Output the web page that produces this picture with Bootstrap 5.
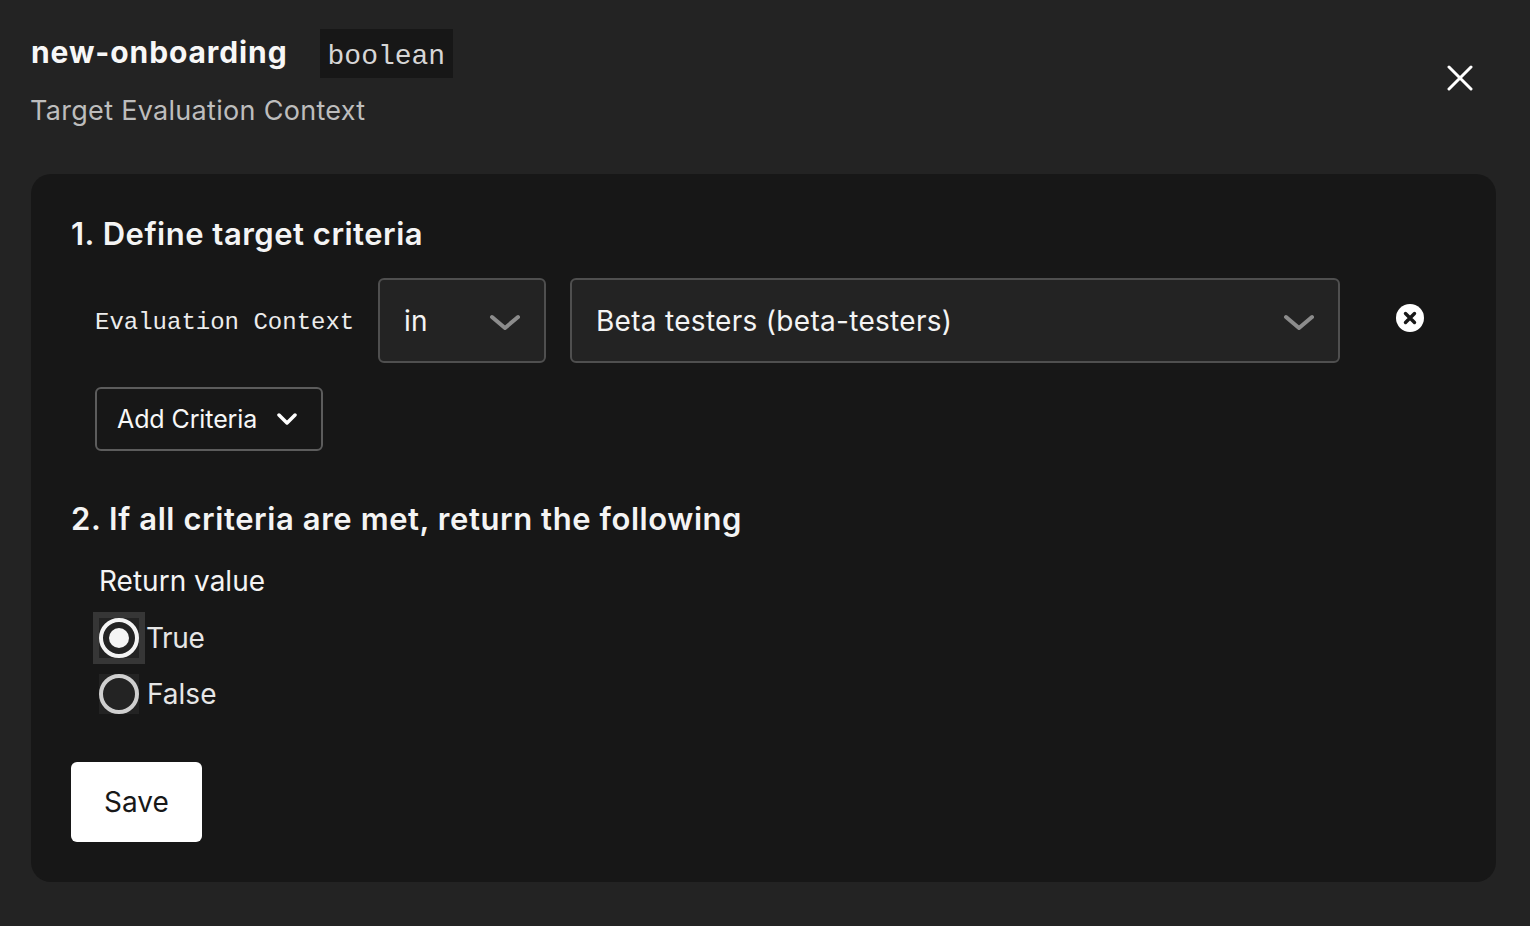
<!doctype html>
<html lang="en">
<head>
<meta charset="utf-8">
<title>new-onboarding</title>
<link href="https://cdn.jsdelivr.net/npm/bootstrap@5.3.0/dist/css/bootstrap.min.css" rel="stylesheet">
<style>
html,body{height:100%}
body{background:#232323;color:#f4f4f4;font-family:Inter,"Liberation Sans",sans-serif;overflow:hidden}
.shell{padding:29px 34px 0 31px}
.flag-name{font-size:30px;font-weight:700;line-height:47px;letter-spacing:.9px;margin:0;color:#f7f7f7;align-self:flex-start}
.type-tag{background:#171717;color:#d6d6d6;font-family:"Liberation Mono",monospace;font-size:28px;line-height:56px;height:49px;padding:0 8px;margin-left:32px;overflow:hidden}
.sub{font-size:27px;line-height:36px;color:#bdbdbd;margin-top:15px;font-weight:400;letter-spacing:.3px;margin-left:-1px}
.close-x{background:none;border:0;padding:0;width:26px;height:26px;margin:36px 23px 0 0;line-height:0}
.panel{background:#171717;border-radius:20px;height:708px;margin-top:45px;padding:41px 40px 40px}
.step-title{font-size:31px;font-weight:600;line-height:38px;margin:0;letter-spacing:.5px}
.crit-row{padding-left:24px;margin-top:25px;height:85px}
.crit-label{font-family:"Liberation Mono",monospace;font-size:24px;width:283px;color:#ececec;flex:none;padding-top:4px}
.pick{background:#232323;border:2px solid #4f4f4f;border-radius:6px;height:85px;padding:0 24px;font-size:28px;color:#f4f4f4;letter-spacing:.3px}
.pick-a{width:168px;margin-right:24px}
.pick-b{width:770px}
.chev{margin-top:4px}
.rm{margin-left:56px;line-height:0;margin-top:-5px}
.add-btn{margin:24px 0 0 24px;width:228px;height:64px;border:2px solid #5c5c5c;border-radius:6px;background:transparent;color:#f7f7f7;font-size:25px;padding:0 24px 0 20px;line-height:1;letter-spacing:-.1px}
.add-btn:hover{color:#f7f7f7}
.second{margin-top:49px;letter-spacing:.58px}
.ret-label{font-size:28px;line-height:36px;margin:25px 0 0 28px}
.radio-row{margin-left:28px;gap:8px;font-size:28px;line-height:40px;color:#e6e6e6;margin-top:16px}
.radio-first{margin-top:19px}
.true-text{margin-left:-1px;letter-spacing:-.4px}
.radio-box{width:40px;height:40px;background:#232323;line-height:0;flex:none}
.radio-on{box-shadow:0 0 0 6px #363636}
.save{background:#fff;color:#181818;width:131px;height:80px;border:0;border-radius:6px;font-size:28px;margin-top:48px;padding:0}
.save:hover{background:#fff;color:#181818}
</style>
</head>
<body>
<div class="shell">
  <div class="d-flex justify-content-between align-items-start">
    <div>
      <div class="d-flex align-items-center">
        <h1 class="flag-name">new-onboarding</h1>
        <span class="type-tag">boolean</span>
      </div>
      <div class="sub">Target Evaluation Context</div>
    </div>
    <button class="close-x" type="button" aria-label="Close">
      <svg width="26" height="26" viewBox="0 0 26 26" fill="none" stroke="#fff" stroke-width="3" stroke-linecap="round"><path d="M2 2 24 24M24 2 2 24"/></svg>
    </button>
  </div>
  <div class="panel">
    <h2 class="step-title">1. Define target criteria</h2>
    <div class="crit-row d-flex align-items-center">
      <span class="crit-label">Evaluation Context</span>
      <div class="pick pick-a d-flex align-items-center justify-content-between">
        <span>in</span>
        <svg class="chev" width="32" height="18" viewBox="0 0 32 18" fill="none" stroke="#8c8c8c" stroke-width="4" stroke-linecap="round" stroke-linejoin="round"><path d="M4 3 17 14 30 3"/></svg>
      </div>
      <div class="pick pick-b d-flex align-items-center justify-content-between">
        <span>Beta testers (beta-testers)</span>
        <svg class="chev" width="32" height="18" viewBox="0 0 32 18" fill="none" stroke="#8c8c8c" stroke-width="4" stroke-linecap="round" stroke-linejoin="round"><path d="M4 3 17 14 30 3"/></svg>
      </div>
      <div class="rm">
        <svg width="28" height="28" viewBox="0 0 28 28"><circle cx="14" cy="14" r="14" fill="#fff"/><path d="M9.5 9.5 18.500 18.500M18.500 9.500 9.500 18.500" stroke="#181818" stroke-width="3.400" stroke-linecap="round"/></svg>
      </div>
    </div>
    <button class="btn add-btn d-flex align-items-center justify-content-between" type="button">
      <span>Add Criteria</span>
      <svg width="20" height="14" viewBox="0 0 20 14" fill="none" stroke="#fff" stroke-width="3.500" stroke-linecap="round" stroke-linejoin="round"><path d="M2 3 10 11 18 3"/></svg>
    </button>
    <h2 class="step-title second">2. If all criteria are met, return the following</h2>
    <div class="ret-label">Return value</div>
    <div class="radio-row radio-first d-flex align-items-center">
      <span class="radio-box radio-on"><svg width="40" height="40" viewBox="0 0 40 40"><circle cx="20" cy="20" r="18" fill="none" stroke="#f4f4f4" stroke-width="4"/><circle cx="20" cy="20" r="10" fill="#f4f4f4"/></svg></span>
      <span class="true-text">True</span>
    </div>
    <div class="radio-row d-flex align-items-center">
      <span class="radio-box"><svg width="40" height="40" viewBox="0 0 40 40"><circle cx="20" cy="20" r="18" fill="none" stroke="#cfcfcf" stroke-width="4"/></svg></span>
      <span>False</span>
    </div>
    <button class="btn save" type="button">Save</button>
  </div>
</div>
<script src="https://cdn.jsdelivr.net/npm/bootstrap@5.3.0/dist/js/bootstrap.bundle.min.js"></script>
</body>
</html>
